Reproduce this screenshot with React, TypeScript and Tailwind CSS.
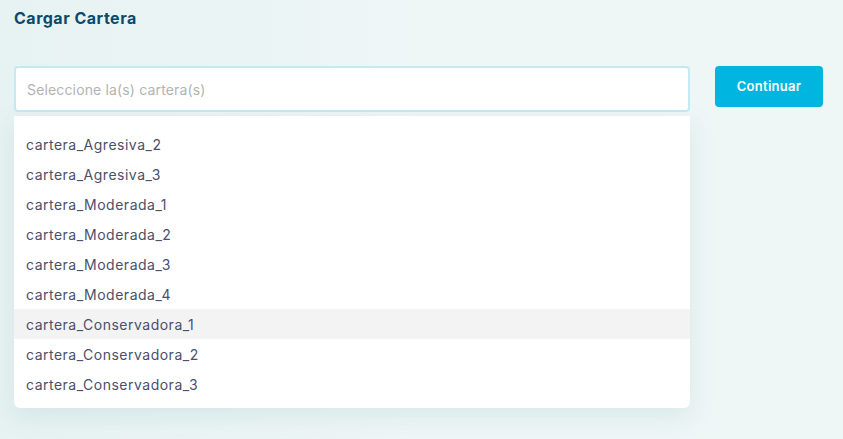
const carteras = [
  "cartera_Agresiva_2",
  "cartera_Agresiva_3",
  "cartera_Moderada_1",
  "cartera_Moderada_2",
  "cartera_Moderada_3",
  "cartera_Moderada_4",
  "cartera_Conservadora_1",
  "cartera_Conservadora_2",
  "cartera_Conservadora_3",
];

export default function App() {
  const hovered = "cartera_Conservadora_1";

  return (
    <div className="min-h-[439px] w-full bg-gradient-to-r from-[#e7f2f2] via-[#eef6f6] to-[#eef6f6] font-['Inter',sans-serif]">
      <div className="px-[14px] pt-[8px]">
        <h1 className="text-[16px] font-bold tracking-[0.5px] text-[#0b4a6a] leading-[20px]">Cargar Cartera</h1>
        <div className="mt-[38px] flex items-start gap-[25px]">
          <div className="relative w-[676px]">
            <div className="h-[46px] rounded-[4px] border-2 border-[#c2eaf2] bg-white flex items-center px-[11px]">
              <span className="text-[14px] tracking-[0.15px] text-[#b3b3b3]">Seleccione la(s) cartera(s)</span>
            </div>
            <ul className="absolute left-0 top-[50px] w-full rounded-b-[6px] bg-white pt-[13px] pb-[9px] shadow-[0_8px_24px_rgba(120,170,180,0.18)]">
              {carteras.map((c) => (
                <li
                  key={c}
                  className={
                    "h-[30px] flex items-center px-[12px] text-[14px] tracking-[0.5px] text-[#4b4f6b] " +
                    (c === hovered ? "bg-[#f3f3f3]" : "")
                  }
                >
                  {c}
                </li>
              ))}
            </ul>
          </div>
          <button className="h-[41px] w-[108px] rounded-[4px] bg-[#00b6e0] text-[13px] font-semibold tracking-[0.3px] text-white">
            Continuar
          </button>
        </div>
      </div>
    </div>
  );
}
